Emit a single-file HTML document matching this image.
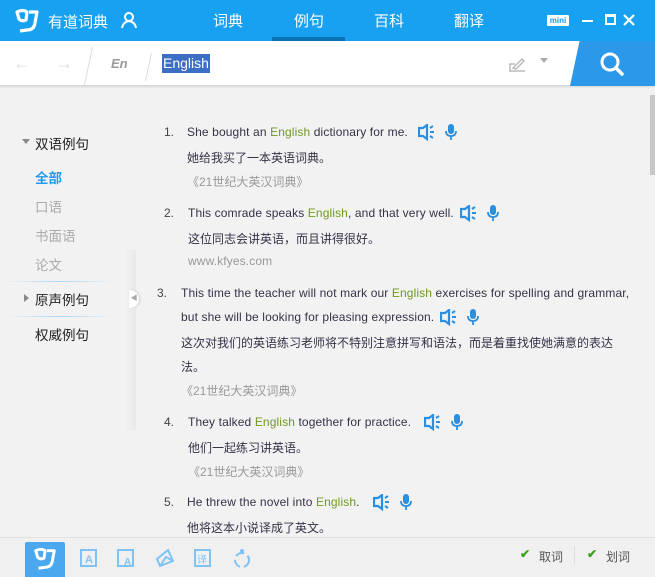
<!DOCTYPE html>
<html><head><meta charset="utf-8"><style>
*{margin:0;padding:0;box-sizing:border-box}
body{width:655px;height:577px;overflow:hidden;background:#f2f2f2;font-family:"Liberation Sans","Noto Sans CJK SC",sans-serif;position:relative;font-size:12px;color:#333348}
.a{position:absolute;white-space:nowrap}
.e{letter-spacing:0.12px}
.top{position:absolute;left:0;top:0;width:655px;height:41px;background:#18a0f1}
.tab{position:absolute;top:10px;color:#fff;font-size:15px}
.sb{position:absolute;left:0;top:41px;width:655px;height:45px;background:#fff;border-bottom:1px solid #d8d8d8;box-shadow:0 1px 2px rgba(0,0,0,.12)}
.g{color:#6f9a1e}
.n{color:#444}
.src{color:#999}
.side{font-size:13.5px;color:#222}
.ic{position:absolute}
</style></head><body>
<div class="top">
 <svg class="ic" style="left:14px;top:8px" width="26" height="26" viewBox="0 0 26 26"><path d="M3 4 Q9 1 13 4 L12 12 Q8 14 5 11 Z M15 4 L23 4 L21 15 Q20 22 13 22 L6 23" fill="none" stroke="#fff" stroke-width="3.2" stroke-linejoin="round"/><circle cx="9" cy="8" r="1.6" fill="#18a0f1"/></svg>
 <div class="a" style="left:48px;top:11px;color:#fff;font-size:15px">有道词典</div>
 <svg class="ic" style="left:120px;top:11px" width="18" height="18" viewBox="0 0 18 18"><circle cx="9" cy="6" r="4" fill="none" stroke="#fff" stroke-width="2"/><path d="M2 17 Q3 11 9 10 Q15 11 16 17" fill="none" stroke="#fff" stroke-width="2"/></svg>
 <div class="tab" style="left:213px">词典</div>
 <div class="tab" style="left:294px">例句</div>
 <div class="tab" style="left:374px">百科</div>
 <div class="tab" style="left:454px">翻译</div>
 <div class="a" style="left:272px;top:37px;width:73px;height:4px;background:#0a73b5"></div>
 <div class="a" style="left:547px;top:15px;width:22px;height:11px;background:#fff;color:#18a0f1;font-size:8px;line-height:11px;text-align:center;font-weight:bold;border-radius:1px">mini</div>
 <div class="a" style="left:582px;top:20px;width:11px;height:2px;background:#fff"></div>
 <div class="a" style="left:605px;top:14px;width:11px;height:11px;border:2px solid #fff;border-top-width:3px"></div>
 <svg class="ic" style="left:623px;top:14px" width="12" height="12" viewBox="0 0 12 12"><path d="M1 1 L11 11 M11 1 L1 11" stroke="#fff" stroke-width="2.2"/></svg>
</div>
<div class="sb">
 <div class="a" style="left:13px;top:12px;color:#ddd;font-size:18px;font-weight:bold">←</div>
 <div class="a" style="left:55px;top:12px;color:#ddd;font-size:18px;font-weight:bold">→</div>
 <div class="a" style="left:88px;top:6px;width:1px;height:38px;background:#ddd;transform:skewX(-12deg)"></div>
 <div class="a" style="left:111px;top:15px;color:#999;font-size:13px;font-style:italic;font-weight:bold">En</div>
 <div class="a" style="left:148px;top:12px;width:1px;height:28px;background:#ddd;transform:skewX(-12deg)"></div>
 <div class="a" style="left:162px;top:13px;background:#3c6ec6;color:#fff;font-size:14px;padding:0 1px;line-height:19px">English</div>
 <svg class="ic" style="left:507px;top:14px" width="20" height="18" viewBox="0 0 20 18"><path d="M2 16 H18 M3 16 V9 H8 M6 13 L15 4 L17 6 L9 14 Z" fill="none" stroke="#bbb" stroke-width="1.5"/></svg>
 <div class="a" style="left:540px;top:17px;border:4px solid transparent;border-top:5px solid #aaa"></div>
 <div class="a" style="left:570px;top:0;width:100px;height:45px;background:#2c98e9;transform:skewX(-12deg);transform-origin:0 100%"></div>
 <svg class="ic" style="left:598px;top:9px" width="28" height="28" viewBox="0 0 28 28"><circle cx="12" cy="12" r="8" fill="none" stroke="#fff" stroke-width="3"/><path d="M18 18 L24 24" stroke="#fff" stroke-width="3.5" stroke-linecap="round"/></svg>
</div>
<div class="a" style="left:650px;top:95px;width:5px;height:80px;background:#c8c8c8"></div>
<div class="a" style="left:124px;top:250px;width:12px;height:180px;background:linear-gradient(90deg,rgba(0,0,0,0),rgba(0,0,0,.04))"></div>
<div class="a" style="left:129px;top:290px;width:10px;height:18px;border-radius:0 9px 9px 0;background:#fff;box-shadow:1px 0 2px #ccc;color:#aaa;font-size:7px;line-height:18px;text-align:center">◀</div>
<div class="a" style="left:22px;top:139px;border:4px solid transparent;border-top:5px solid #888"></div>
<div class="a side" style="left:35px;top:133px">双语例句</div>
<div class="a side" style="left:35px;top:167px;color:#1e9bef;font-weight:bold">全部</div>
<div class="a side" style="left:35px;top:196px;color:#aaa">口语</div>
<div class="a side" style="left:35px;top:225px;color:#aaa">书面语</div>
<div class="a side" style="left:35px;top:254px;color:#aaa">论文</div>
<div class="a" style="left:5px;top:281px;width:110px;height:1px;background:linear-gradient(90deg,transparent,#a9d6f5,transparent)"></div>
<div class="a" style="left:24px;top:294px;border:4px solid transparent;border-left:5px solid #888"></div>
<div class="a side" style="left:35px;top:289px">原声例句</div>
<div class="a" style="left:5px;top:316px;width:110px;height:1px;background:linear-gradient(90deg,transparent,#a9d6f5,transparent)"></div>
<div class="a side" style="left:35px;top:324px">权威例句</div>

<div class="a n" style="left:164px;top:125px">1.</div>
<div class="a e" style="left:187px;top:125px">She bought an <span class="g">English</span> dictionary for me.</div>
<div class="a" style="left:187px;top:149px">她给我买了一本英语词典。</div>
<div class="a src" style="left:187px;top:173px">《21世纪大英汉词典》</div>

<div class="a n" style="left:164px;top:206px">2.</div>
<div class="a e" style="left:188px;top:206px">This comrade speaks <span class="g">English</span>, and that very well.</div>
<div class="a" style="left:188px;top:230px">这位同志会讲英语，而且讲得很好。</div>
<div class="a src e" style="left:188px;top:254px">www.kfyes.com</div>

<div class="a n" style="left:157px;top:286px">3.</div>
<div class="a e" style="left:181px;top:286px">This time the teacher will not mark our <span class="g">English</span> exercises for spelling and grammar,</div>
<div class="a e" style="left:181px;top:310px">but she will be looking for pleasing expression.</div>
<div class="a" style="left:181px;top:334px">这次对我们的英语练习老师将不特别注意拼写和语法，而是着重找使她满意的表达</div>
<div class="a" style="left:181px;top:358px">法。</div>
<div class="a src" style="left:181px;top:382px">《21世纪大英汉词典》</div>

<div class="a n" style="left:164px;top:415px">4.</div>
<div class="a e" style="left:188px;top:415px">They talked <span class="g">English</span> together for practice.</div>
<div class="a" style="left:188px;top:439px">他们一起练习讲英语。</div>
<div class="a src" style="left:188px;top:463px">《21世纪大英汉词典》</div>

<div class="a n" style="left:164px;top:495px">5.</div>
<div class="a e" style="left:187px;top:495px">He threw the novel into <span class="g">English</span>.</div>
<div class="a" style="left:187px;top:519px">他将这本小说译成了英文。</div>

<svg width="0" height="0" style="position:absolute"><defs>
<g id="sp"><path d="M1 4 H5 L9 1 V15 L5 12 H1 Z" fill="none" stroke="#2a8fe0" stroke-width="2.2"/><path d="M12 4 L15 2 M12 8 H16 M12 12 L15 14" stroke="#2a8fe0" stroke-width="2"/></g>
<g id="mc"><rect x="4" y="0" width="6" height="10" rx="3" fill="#2a8fe0"/><path d="M2 7 Q2 12 7 12 Q12 12 12 7 M7 12 V16" fill="none" stroke="#2a8fe0" stroke-width="1.8"/></g>
</defs></svg>
<svg class="ic" style="left:418px;top:124px" width="50" height="17"><use href="#sp"/><use href="#mc" x="26"/></svg>
<svg class="ic" style="left:460px;top:205px" width="50" height="17"><use href="#sp"/><use href="#mc" x="26"/></svg>
<svg class="ic" style="left:440px;top:309px" width="50" height="17"><use href="#sp"/><use href="#mc" x="26"/></svg>
<svg class="ic" style="left:424px;top:414px" width="50" height="17"><use href="#sp"/><use href="#mc" x="26"/></svg>
<svg class="ic" style="left:373px;top:494px" width="50" height="17"><use href="#sp"/><use href="#mc" x="26"/></svg>

<div class="a" style="left:0;top:537px;width:655px;height:40px;background:#f0f0f0;border-top:1px solid #e2e2e2"></div>
<div class="a" style="left:25px;top:542px;width:40px;height:35px;background:#4ba7ee;border-radius:2px 2px 0 0"></div>
<svg class="ic" style="left:33px;top:547px" width="24" height="24" viewBox="0 0 26 26"><path d="M3 4 Q9 1 13 4 L12 12 Q8 14 5 11 Z M15 4 L23 4 L21 15 Q20 22 13 22 L6 23" fill="none" stroke="#fff" stroke-width="3.2" stroke-linejoin="round"/></svg>
<svg class="ic" style="left:78px;top:547px" width="22" height="22" viewBox="0 0 22 22"><rect x="3" y="3" width="15" height="16" fill="none" stroke="#7fc3f5" stroke-width="2"/><text x="7" y="16" font-size="11" fill="#7fc3f5" font-family="Liberation Sans" font-weight="bold">A</text></svg>
<svg class="ic" style="left:115px;top:547px" width="22" height="22" viewBox="0 0 22 22"><rect x="3" y="3" width="15" height="16" fill="none" stroke="#7fc3f5" stroke-width="2"/><text x="9" y="18" font-size="10" fill="#7fc3f5" font-family="Liberation Sans" font-weight="bold">A</text></svg>
<svg class="ic" style="left:154px;top:547px" width="22" height="22" viewBox="0 0 22 22"><path d="M3 12 L14 3 L19 14 L6 19 Z M6 19 L12 10 L19 14" fill="none" stroke="#7fc3f5" stroke-width="2"/></svg>
<svg class="ic" style="left:192px;top:547px" width="22" height="22" viewBox="0 0 22 22"><rect x="3" y="3" width="15" height="16" fill="none" stroke="#7fc3f5" stroke-width="2"/><text x="5" y="16" font-size="10" fill="#7fc3f5" font-family="Noto Sans CJK SC">译</text></svg>
<svg class="ic" style="left:230px;top:547px" width="24" height="24" viewBox="0 0 24 24"><circle cx="12" cy="13" r="7" fill="none" stroke="#7fc3f5" stroke-width="2" stroke-dasharray="9 4"/><circle cx="12" cy="4" r="2" fill="#7fc3f5"/></svg>
<div class="a" style="left:520px;top:547px;color:#3aa11a;font-size:12px;font-weight:bold">✔</div>
<div class="a" style="left:539px;top:548px;color:#555;font-size:12px">取词</div>
<div class="a" style="left:574px;top:546px;width:1px;height:18px;background:#ddd"></div>
<div class="a" style="left:587px;top:547px;color:#3aa11a;font-size:12px;font-weight:bold">✔</div>
<div class="a" style="left:606px;top:548px;color:#555;font-size:12px">划词</div>
</body></html>
